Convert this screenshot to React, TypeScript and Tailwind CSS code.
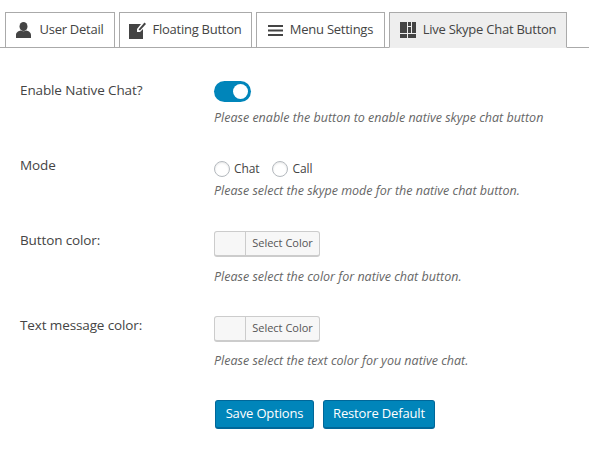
const font = { fontFamily: '"Open Sans","Noto Sans",sans-serif' };

function Tab({ icon, label, active, w, gap }: { icon: React.ReactNode; label: string; active?: boolean; w: string; gap: string }) {
  return (
    <div className={`${w} ${gap} h-[36px] flex items-center justify-center border border-[#aaaaaa] ${active ? "bg-[#eeeeee] border-b-[#eeeeee]" : "bg-white"} -mb-px text-[13px] tracking-[-0.25px] text-[#444444]`}>
      {icon}
      <span>{label}</span>
    </div>
  );
}

function Row({ label, h, children }: { label: string; h: string; children: React.ReactNode }) {
  return (
    <div className={`flex ${h}`}>
      <div className="w-[194px] shrink-0 text-[13.5px] text-[#444444] tracking-[-0.12px] leading-[18px]">{label}</div>
      <div className="flex flex-col">{children}</div>
    </div>
  );
}

function Desc({ children }: { children: React.ReactNode }) {
  return <p className="text-[12.5px] italic leading-[18px] text-[#666666]">{children}</p>;
}

function ColorButton() {
  return (
    <div className="flex h-[26px] w-[106px] rounded-[3px] border border-[#cccccc] border-b-2 bg-[#f7f7f7] text-[11px] text-[#555555]">
      <div className="w-[31px] border-r border-[#cccccc]" />
      <div className="flex flex-1 items-center justify-center">Select Color</div>
    </div>
  );
}

function Radio({ label }: { label: string }) {
  return (
    <label className="flex items-center gap-[4px] text-[12px] tracking-[-0.1px] text-[#444444]">
      <span className="h-[16px] w-[16px] rounded-full border border-[#b4b9be] bg-white shadow-[inset_0_1px_2px_rgba(0,0,0,0.1)]" />
      {label}
    </label>
  );
}

export default function App() {
  return (
    <div className="h-[463px] w-[589px] overflow-hidden bg-white" style={font}>
      <div className="flex h-[48px] items-end border-b border-[#aaaaaa] pl-[5px]">
        <div className="flex gap-[4px]">
          <Tab w="w-[110px]" gap="gap-[8px]" label="User Detail" icon={
            <svg width="15" height="16" viewBox="0 0 15 16" fill="#444444"><ellipse cx="7.500" cy="4.500" rx="4" ry="4.500" /><path d="M0 16v-3c0-3 3-4 4.500-4.500 1.500 1 4.500 1 6 0C12 9 15 10 15 13v3z" /></svg>
          } />
          <Tab w="w-[133px]" gap="gap-[6px]" label="Floating Button" icon={
            <svg width="17" height="18" viewBox="0 0 17 18" fill="#444444"><path d="M0 3h12L8 8v3h3l3-3v10H0z" /><path d="M9.500 8.500l6-7L17 3l-6 6.500z" /></svg>
          } />
          <Tab w="w-[129px]" gap="gap-[7px]" label="Menu Settings" icon={
            <svg width="15" height="11" viewBox="0 0 15 11" fill="#444444"><rect width="15" height="2" /><rect y="4.500" width="15" height="2" /><rect y="9" width="15" height="2" /></svg>
          } />
          <Tab w="w-[178px]" gap="gap-[7px]" active label="Live Skype Chat Button" icon={
            <svg width="16" height="16" viewBox="0 0 16 16" fill="#444444"><rect width="7" height="11" /><rect y="12" width="7" height="4" /><rect x="8" width="3" height="4" /><rect x="12" width="4" height="11" /><rect x="8" y="5" width="3" height="6" /><rect x="8" y="12" width="8" height="4" /></svg>
          } />
        </div>
      </div>
      <div className="pl-[20px] pt-[33px]">
        <Row label="Enable Native Chat?" h="h-[75px]">
          <div className="flex h-[21px] w-[37px] items-center justify-end rounded-full bg-[#0085ba] pr-[3px]">
            <span className="h-[15px] w-[15px] rounded-full bg-white" />
          </div>
          <div className="mt-[7px]"><Desc>Please enable the button to enable native skype chat button</Desc></div>
        </Row>
        <Row label="Mode" h="h-[75px]">
          <div className="mt-[4px] flex gap-[13px]"><Radio label="Chat" /><Radio label="Call" /></div>
          <div className="mt-[4px]"><Desc>Please select the skype mode for the native chat button.</Desc></div>
        </Row>
        <Row label="Button color:" h="h-[85px]">
          <ColorButton />
          <div className="mt-[11px]"><Desc>Please select the color for native chat button.</Desc></div>
        </Row>
        <Row label="Text message color:" h="h-[84px]">
          <ColorButton />
          <div className="mt-[10px]"><Desc>Please select the text color for you native chat.</Desc></div>
        </Row>
        <div className="flex gap-[9px] pl-[195px]">
          <button className="h-[29px] w-[99px] rounded-[3px] border border-[#006799] border-b-2 bg-[#0085ba] text-[13px] tracking-[-0.15px] text-white">Save Options</button>
          <button className="h-[29px] w-[112px] rounded-[3px] border border-[#006799] border-b-2 bg-[#0085ba] text-[13px] tracking-[-0.15px] text-white">Restore Default</button>
        </div>
      </div>
    </div>
  );
}
